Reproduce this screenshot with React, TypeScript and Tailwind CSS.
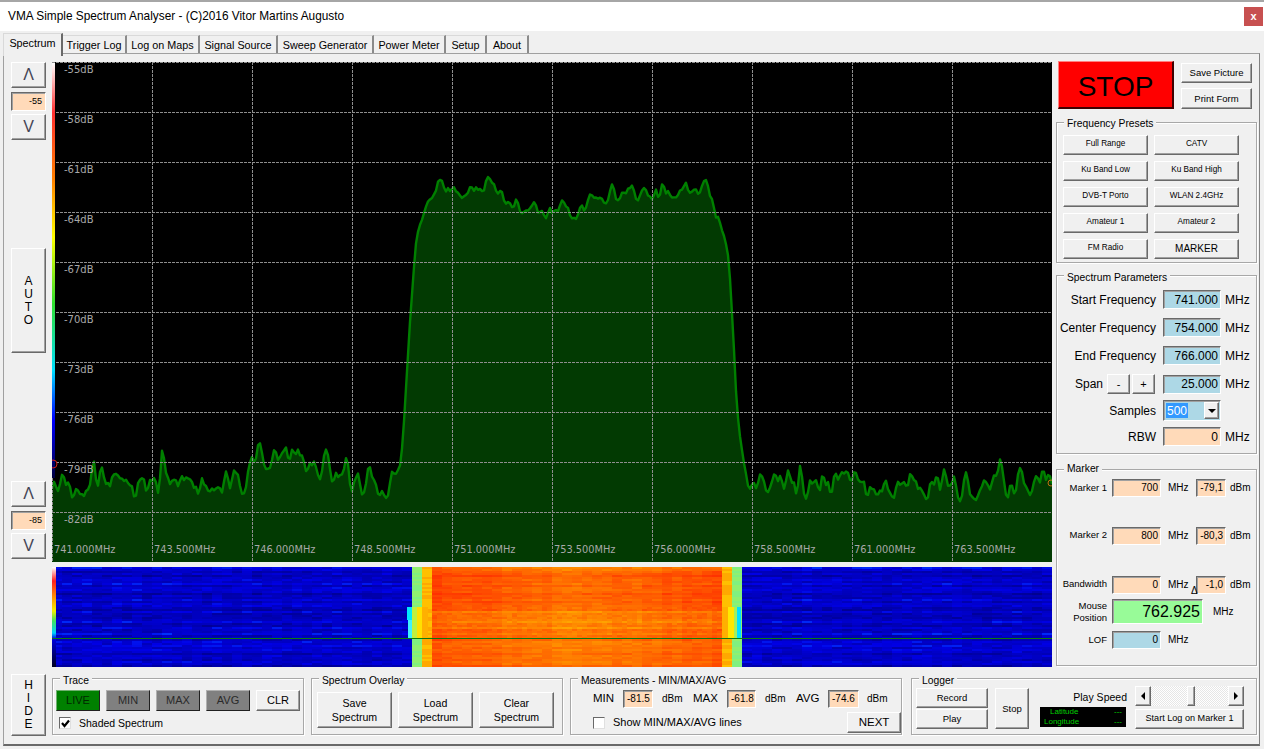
import React from 'react';

const raised = 'border border-t-white border-l-white border-r-[#696969] border-b-[#696969] shadow-[inset_-1px_-1px_0_#a0a0a0] bg-[#f0f0f0] flex items-center justify-center text-center';
const sunken = 'border border-t-[#696969] border-l-[#696969] border-r-white border-b-white shadow-[inset_1px_1px_0_#a0a0a0] flex items-center justify-end';

function rng(seed: number) {
  return () => {
    seed |= 0;
    seed = (seed + 0x6d2b79f5) | 0;
    let t = Math.imul(seed ^ (seed >>> 15), 1 | seed);
    t = (t + Math.imul(t ^ (t >>> 7), 61 | t)) ^ t;
    return ((t ^ (t >>> 14)) >>> 0) / 4294967296;
  };
}

const envelope: [number, number][] = [
  [52, 486], [240, 484], [250, 470], [256, 452], [298, 452], [304, 468], [345, 470], [352, 482], [396, 482],
  [401, 462], [404, 420], [407, 370], [410, 320], [413, 280], [416, 245], [419, 225], [423, 215], [427, 205],
  [431, 195], [434, 187], [490, 188], [498, 195], [523, 205], [540, 215], [557, 211], [577, 211], [590, 202],
  [607, 195], [630, 188], [657, 192], [683, 185], [708, 194], [715, 200], [718, 215], [725, 240], [728, 257],
  [730, 280], [733, 330], [736, 390], [739, 430], [743, 460], [748, 484], [1052, 484],
];

const spikes: [number, number][] = [
  [93, -24], [162, -30], [202, -14], [140, -10], [262, -10], [283, -8], [860, -14], [932, -14], [1000, -12], [800, -10], [770, -9],
];

function envAt(x: number) {
  for (let i = 1; i < envelope.length; i++) {
    const [x0, y0] = envelope[i - 1];
    const [x1, y1] = envelope[i];
    if (x <= x1) return y0 + ((y1 - y0) * (x - x0)) / (x1 - x0);
  }
  return 484;
}

function buildTrace() {
  const r = rng(71);
  const raw: number[] = [];
  for (let x = 52; x <= 1052; x += 2) raw.push(r() - 0.5);
  const pts: string[] = [];
  raw.forEach((_, i) => {
    const x = 52 + i * 2;
    const n = ((raw[i - 1] ?? 0) * 0.7 + raw[i] * 1.6 + (raw[i + 1] ?? 0) * 0.7) / 1.8;
    const edge = (x > 398 && x < 430) || (x > 716 && x < 748);
    const floor = x <= 398 || x >= 748;
    const amp = edge ? 4 : floor ? 26 : 17;
    let y = envAt(x) + n * amp;
    spikes.forEach(([sx, dy]) => {
      if (Math.abs(sx - x) < 4) y += dy * (1 - Math.abs(sx - x) / 4);
    });
    pts.push(`${x},${y.toFixed(1)}`);
  });
  return pts;
}

const tracePts = buildTrace();
const dbLabels = ['-55dB', '-58dB', '-61dB', '-64dB', '-67dB', '-70dB', '-73dB', '-76dB', '-79dB', '-82dB'];
const freqLabels = ['741.000MHz', '743.500MHz', '746.000MHz', '748.500MHz', '751.000MHz', '753.500MHz', '756.000MHz', '758.500MHz', '761.000MHz', '763.500MHz'];

function SpectrumChart() {
  return (
    <svg width="1000" height="500" viewBox="52 62 1000 500" className="block bg-black">
      <defs>
        <linearGradient id="scale" x1="0" y1="0" x2="0" y2="1">
          <stop offset="0" stopColor="#ffffff" />
          <stop offset="0.12" stopColor="#ff3030" />
          <stop offset="0.28" stopColor="#ff8000" />
          <stop offset="0.42" stopColor="#ffff00" />
          <stop offset="0.58" stopColor="#30e030" />
          <stop offset="0.74" stopColor="#00e0ff" />
          <stop offset="0.86" stopColor="#0000ff" />
          <stop offset="1" stopColor="#000040" />
        </linearGradient>
      </defs>
      <polygon points={`52,562 ${tracePts.join(' ')} 1052,562`} fill="#023a02" />
      <polyline points={tracePts.join(' ')} fill="none" stroke="#008000" strokeWidth="2.4" strokeLinejoin="round" />
      {Array.from({ length: 10 }, (_, i) => (
        <line key={i} x1={52.5 + i * 100} x2={52.5 + i * 100} y1={62} y2={562} stroke="#8e8e8e" strokeDasharray="3 1" />
      ))}
      {Array.from({ length: 10 }, (_, i) => (
        <line key={i} x1={52} x2={1052} y1={62.5 + i * 50} y2={62.5 + i * 50} stroke="#8e8e8e" strokeDasharray="3 1" />
      ))}
      <rect x="52" y="63" width="3" height="415" fill="url(#scale)" />
      <circle cx="53" cy="464" r="4" fill="none" stroke="#d02020" />
      <circle cx="1051" cy="483" r="3" fill="none" stroke="#c07010" />
      {dbLabels.map((t, i) => (
        <text key={t} x={64} y={73 + i * 50} fill="#a8a8a8" fontSize="10" fontFamily="'DejaVu Sans', sans-serif">{t}</text>
      ))}
      {freqLabels.map((t, i) => (
        <text key={t} x={54 + i * 100} y={553} fill="#a8a8a8" fontSize="9.8" fontFamily="'DejaVu Sans', sans-serif">{t}</text>
      ))}
    </svg>
  );
}

function buildWaterfall() {
  const r = rng(5);
  const rowBias = Array.from({ length: 50 }, () => r());
  rowBias[0] = 1;
  const colBias = Array.from({ length: 100 }, () => r());
  const cells: { x: number; y: number; w: number; h: number; c: string }[] = [];

  const blue = (row: number, col: number) => {
    const v = rowBias[row] * 0.5 + r() * 0.42 + colBias[col] * 0.08;
    const b = Math.round(140 + v * 115);
    const g = v > 0.78 ? Math.round((v - 0.78) * 260) : 0;
    return `rgb(0,${g},${b})`;
  };
  const hot = (x: number, y: number, row: number, col: number) => {
    const mid = 1 - Math.abs(x - 577) / 150;
    const band = y > 610 && y < 628 ? 0.14 : y > 572 && y < 606 ? -0.12 : 0;
    const v = Math.min(1, Math.max(0, 0.14 + mid * 0.3 + band + colBias[col] * 0.1 + rowBias[row] * 0.22 + r() * 0.2));
    return `rgb(255,${Math.round(30 + v * 135)},0)`;
  };

  for (let row = 0; row < 50; row++) {
    const y = 567 + row * 2;
    const smear = y >= 607 && y < 638;
    for (let col = 0; col < 100; col++) {
      const x = 52 + col * 10;
      let c = blue(row, col);
      if (x === 412 || x === 732) c = r() > 0.5 ? '#90f070' : '#80f080';
      else if (x === 422 || x === 722) c = r() > 0.5 ? '#ffc000' : '#ffa800';
      if (x >= 432 && x < 722) {
        if (smear) {
          cells.push({ x, y, w: 5, h: 2, c: hot(x, y, row, col) });
          cells.push({ x: x + 5, y, w: 5, h: 2, c: hot(x, y, row, col) });
          continue;
        }
        c = hot(x, y, row, col);
      }
      cells.push({ x, y, w: 10, h: 2, c });
    }
  }
  return cells;
}

const waterfallCells = buildWaterfall();

function Waterfall() {
  return (
    <svg width="1000" height="100" viewBox="52 567 1000 100" className="block mt-[5px]" shapeRendering="crispEdges">
      <defs>
        <linearGradient id="wscale" x1="0" y1="0" x2="0" y2="1">
          <stop offset="0" stopColor="#ffffff" />
          <stop offset="0.14" stopColor="#ff2020" />
          <stop offset="0.32" stopColor="#ffa000" />
          <stop offset="0.44" stopColor="#f0f000" />
          <stop offset="0.54" stopColor="#40e060" />
          <stop offset="0.66" stopColor="#00d0ff" />
          <stop offset="0.72" stopColor="#0000e0" />
          <stop offset="1" stopColor="#000020" />
        </linearGradient>
      </defs>
      {waterfallCells.map((c, i) => (
        <rect key={i} x={c.x} y={c.y} width={c.w} height={c.h} fill={c.c} />
      ))}
      <rect x="407" y="607" width="5" height="13" fill="#00e8ff" />
      <rect x="408" y="620" width="4" height="18" fill="#40f0ff" />
      <rect x="412" y="607" width="7" height="31" fill="#c0f040" />
      <rect x="417" y="607" width="5" height="31" fill="#ffe000" />
      <rect x="422" y="607" width="6" height="31" fill="#ffb000" />
      <rect x="722" y="607" width="6" height="31" fill="#ffb000" />
      <rect x="728" y="607" width="6" height="31" fill="#ffe800" />
      <rect x="734" y="607" width="3" height="31" fill="#a0f060" />
      <rect x="737" y="607" width="4" height="31" fill="#00e0ff" />
      <rect x="52" y="567" width="4" height="100" fill="url(#wscale)" />
      <rect x="52" y="638" width="1000" height="1" fill="#0a7a10" />
    </svg>
  );
}

function Group({ title, className, children, legendClass = 'top-[-7px]' }: { title: string; className: string; children: React.ReactNode; legendClass?: string }) {
  return (
    <div className={`relative border border-[#a8a8a8] shadow-[inset_1px_1px_0_#ffffff,1px_1px_0_#ffffff] ${className}`}>
      <span className={`absolute left-[7px] ${legendClass} bg-[#f0f0f0] px-[3px] text-[10.3px] leading-[14px] whitespace-nowrap`}>{title}</span>
      {children}
    </div>
  );
}

function LeftSpin({ value, className }: { value: string; className: string }) {
  return (
    <div className={className}>
      <div className={`${raised} h-[26px] text-[16px] text-[#445]`}>Λ</div>
      <div className={`${sunken} h-[19px] mt-[4px] bg-[#ffdab9] text-[9px] pr-[3px]`}>{value}</div>
      <div className={`${raised} h-[26px] mt-[3px] text-[16px] text-[#445]`}>V</div>
    </div>
  );
}

function ParamRow({ label, value, bg, className }: { label: string; value: string; bg: string; className: string }) {
  return (
    <div className={`flex items-center h-[19px] ${className}`}>
      <div className="w-[99px] text-right text-[12px]">{label}</div>
      <div className={`${sunken} ${bg} ml-[7px] w-[58px] h-[19px] text-[12px] pr-[2px]`}>{value}</div>
      <div className="ml-[4px] text-[12px]">MHz</div>
    </div>
  );
}

function MarkerRow({ label, value, level, className, labelClass = '' }: { label: string; value: string; level: string; className: string; labelClass?: string }) {
  return (
    <div className={`relative flex items-center h-[18px] text-[10px] ${className}`}>
      <div className={`w-[50px] text-right text-[9.5px] whitespace-nowrap ${labelClass}`}>{label}</div>
      <div className={`${sunken} bg-[#ffdab9] ml-[5px] w-[49px] h-[18px] pr-[2px]`}>{value}</div>
      <div className="ml-[7px] w-[28px]">MHz</div>
      <div className={`${sunken} bg-[#ffdab9] w-[30px] h-[18px] pr-[2px]`}>{level}</div>
      <div className="ml-[4px]">dBm</div>
    </div>
  );
}

function Check({ on }: { on?: boolean }) {
  return (
    <div className="w-[12px] h-[12px] bg-white border border-t-[#696969] border-l-[#696969] border-r-[#e0e0e0] border-b-[#e0e0e0] flex items-center justify-center">
      {on && (
        <svg width="9" height="9" viewBox="0 0 9 9">
          <path d="M1 4 L3.5 7 L8 1.5" fill="none" stroke="#000" strokeWidth="2.2" />
        </svg>
      )}
    </div>
  );
}

function Tri({ dir }: { dir: 'left' | 'right' | 'down' }) {
  const d = dir === 'left' ? 'M5 1 L5 9 L1 5 Z' : dir === 'right' ? 'M1 1 L1 9 L5 5 Z' : 'M1 2 L9 2 L5 6 Z';
  return (
    <svg width={dir === 'down' ? 10 : 6} height="10" viewBox={dir === 'down' ? '0 0 10 8' : '0 0 6 10'}>
      <path d={d} fill="#000" />
    </svg>
  );
}

const tabs = [
  { name: 'Trigger Log', w: 'w-[64px]' },
  { name: 'Log on Maps', w: 'w-[73px]' },
  { name: 'Signal Source', w: 'w-[78px]' },
  { name: 'Sweep Generator', w: 'w-[96px]' },
  { name: 'Power Meter', w: 'w-[72px]' },
  { name: 'Setup', w: 'w-[41px]' },
  { name: 'About', w: 'w-[42px]' },
];

const presets = ['Full Range', 'CATV', 'Ku Band Low', 'Ku Band High', 'DVB-T Porto', 'WLAN 2.4GHz', 'Amateur 1', 'Amateur 2', 'FM Radio'];

export default function App() {
  return (
    <div className="w-[1264px] h-[749px] overflow-hidden bg-[#f0f0f0] text-black font-['Liberation_Sans',Arial,sans-serif] leading-none">
      {/* Title bar */}
      <div className="h-[31px] bg-white border-t-2 border-[#a6a6a6] flex items-center justify-between pl-[8px] pr-px">
        <span className="text-[11.85px]">VMA Simple Spectrum Analyser - (C)2016 Vitor Martins Augusto</span>
        <div className="w-[19px] h-[19px] bg-[#c75050] text-white text-[11px] font-bold flex items-center justify-center">x</div>
      </div>

      {/* Tabs */}
      <div className="flex h-[22px] pl-[3px] text-[10.8px]">
        <div className="relative z-10 w-[60px] h-[23px] mt-[2px] pb-[3px] bg-[#f0f0f0] border border-[#d9d9d9] border-b-0 border-r-[#696969] border-r-2 flex items-center justify-center">Spectrum</div>
        {tabs.map((t) => (
          <div key={t.name} className={`${t.w} h-[18px] mt-[4px] pt-[1px] border-r-2 border-r-[#8a8a8a] border-t border-t-[#d9d9d9] flex items-center justify-center whitespace-nowrap`}>{t.name}</div>
        ))}
      </div>

      {/* Tab page */}
      <div className="ml-[3px] w-[1257px] h-[693px] border border-[#a0a0a0] border-r-[#808080] border-b-2 border-b-[#696969] pl-[7px] pt-[8px]">
        <div className="flex h-[605px]">
          {/* Left controls */}
          <div className="w-[35px] flex flex-col">
            <LeftSpin value="-55" className="" />
            <div className={`${raised} mt-[108px] h-[105px] text-[12px] leading-[13px]`}>A<br />U<br />T<br />O</div>
            <LeftSpin value="-85" className="mt-[128px]" />
          </div>

          {/* Chart column */}
          <div className="ml-[6px] w-[1000px]">
            <SpectrumChart />
            <Waterfall />
          </div>

          {/* Right column */}
          <div className="ml-[4px] w-[201px]">
            <div className="flex -mt-px pl-[2px]">
              <div className="w-[116px] h-[48px] pt-[4px] bg-[#ff0000] border border-t-[#ff8080] border-l-[#ff8080] border-r-2 border-b-2 border-r-[#400000] border-b-[#400000] flex items-center justify-center text-[28px] text-black">STOP</div>
              <div className="ml-[7px] w-[71px] flex flex-col pt-[2px]">
                <div className={`${raised} h-[20px] text-[9.5px]`}>Save Picture</div>
                <div className={`${raised} h-[21px] mt-[5px] text-[9.5px]`}>Print Form</div>
              </div>
            </div>

            <Group title="Frequency Presets" className="mt-[13px] h-[141px] pl-[6px] pt-[12px]" legendClass="top-[-6px]">
              <div className="grid grid-cols-[85px_85px] gap-x-[6px] gap-y-[6px]">
                {presets.map((p) => (
                  <div key={p} className={`${raised} h-[20px] pb-[1px] text-[8.2px]`}>{p}</div>
                ))}
                <div className={`${raised} h-[20px] text-[10px]`}>MARKER</div>
              </div>
            </Group>

            <Group title="Spectrum Parameters" className="mt-[12px] h-[179px] pt-[14px]" legendClass="top-[-5px]">
              <ParamRow label="Start Frequency" value="741.000" bg="bg-[#add8e6]" className="" />
              <ParamRow label="Center Frequency" value="754.000" bg="bg-[#add8e6]" className="mt-[9px]" />
              <ParamRow label="End Frequency" value="766.000" bg="bg-[#add8e6]" className="mt-[9px]" />
              <div className="flex items-center h-[20px] mt-[9px]">
                <div className="w-[46px] text-right text-[12px]">Span</div>
                <div className={`${raised} ml-[4px] w-[23px] h-[20px] text-[11px]`}>-</div>
                <div className={`${raised} ml-[2px] w-[23px] h-[20px] text-[11px]`}>+</div>
                <div className={`${sunken} bg-[#add8e6] ml-[8px] w-[58px] h-[19px] text-[12px] pr-[2px]`}>25.000</div>
                <div className="ml-[4px] text-[12px]">MHz</div>
              </div>
              <div className="flex items-center h-[21px] mt-[6px]">
                <div className="w-[99px] text-right text-[12px]">Samples</div>
                <div className={`${sunken} !justify-start bg-[#add8e6] ml-[7px] w-[58px] h-[21px] text-[12px] pl-[2px]`}>
                  <span className="bg-[#3399ff] text-white w-[22px] h-[15px] flex items-center pl-[1px]">500</span>
                  <div className={`${raised} ml-[16px] w-[15px] h-[17px]`}><Tri dir="down" /></div>
                </div>
              </div>
              <ParamRow label="RBW" value="0" bg="bg-[#ffdab9]" className="mt-[6px]" />
            </Group>

            <Group title="Marker" className="mt-[15px] h-[197px] pt-[9px]" legendClass="top-[-8px]">
              <MarkerRow label="Marker 1" value="700" level="-79,1" className="" labelClass="pb-[1px]" />
              <MarkerRow label="Marker 2" value="800" level="-80,3" className="mt-[30px]" labelClass="pb-[2px]" />
              <MarkerRow label="Bandwidth" value="0" level="-1,0" className="mt-[31px]" labelClass="pb-[3px]" />
              <div className="flex items-center h-[25px] mt-[5px]">
                <div className="w-[50px] text-right text-[9.5px] leading-[12px]">Mouse<br />Position</div>
                <div className={`${sunken} bg-[#98fb98] ml-[5px] w-[91px] h-[25px] text-[16px] pr-[2px]`}>762.925</div>
                <div className="ml-[10px] text-[10px]">MHz</div>
              </div>
              <div className="flex items-center h-[18px] mt-[7px] text-[10px]">
                <div className="w-[50px] text-right text-[9.5px]">LOF</div>
                <div className={`${sunken} bg-[#add8e6] ml-[5px] w-[49px] h-[18px] pr-[2px]`}>0</div>
                <div className="ml-[7px]">MHz</div>
              </div>
              <span className="absolute left-[134px] top-[116px] text-[10px]">Δ</span>
            </Group>
          </div>
        </div>

        {/* Bottom row */}
        <div className="flex mt-[6px]">
          <div className={`${raised} w-[35px] h-[62px] mt-px text-[12px] leading-[13px]`}>H<br />I<br />D<br />E</div>

          <Group title="Trace" className="ml-[6px] mt-[5px] w-[252px] h-[57px] pl-[3px] pt-[11px]" legendClass="top-[-5px]">
            <div className="flex gap-[6px] text-[11px]">
              <div className="w-[44px] h-[21px] bg-[#008000] text-[#002800] border border-t-[#70b070] border-l-[#70b070] border-r-[#202020] border-b-[#202020] flex items-center justify-center">LIVE</div>
              {['MIN', 'MAX', 'AVG'].map((t) => (
                <div key={t} className="w-[44px] h-[21px] bg-[#808080] text-[#2a2a2a] border border-t-[#b0b0b0] border-l-[#b0b0b0] border-r-[#202020] border-b-[#202020] flex items-center justify-center">{t}</div>
              ))}
              <div className={`${raised} w-[44px] h-[21px]`}>CLR</div>
            </div>
            <div className="flex items-center mt-[6px] pl-[3px] text-[10.5px]">
              <Check on />
              <span className="ml-[8px]">Shaded Spectrum</span>
            </div>
          </Group>

          <Group title="Spectrum Overlay" className="ml-[7px] mt-[5px] w-[252px] h-[57px] pl-[5px] pt-[13px]" legendClass="top-[-5px]">
            <div className="flex gap-[6px] text-[10.6px] leading-[14px]">
              <div className={`${raised} w-[75px] h-[36px]`}>Save<br />Spectrum</div>
              <div className={`${raised} w-[75px] h-[36px]`}>Load<br />Spectrum</div>
              <div className={`${raised} w-[75px] h-[36px]`}>Clear<br />Spectrum</div>
            </div>
          </Group>

          <Group title="Measurements - MIN/MAX/AVG" className="ml-[7px] mt-[5px] w-[332px] h-[57px] pl-[22px] pt-[11px]" legendClass="top-[-5px]">
            <div className="flex items-center h-[18px] text-[11.5px]">
              <div className="w-[30px]">MIN</div>
              <div className={`${sunken} bg-[#ffdab9] w-[30px] h-[18px] text-[10px] !justify-start pl-[3px]`}>-81.5</div>
              <div className="ml-[9px] w-[31px] text-[10px]">dBm</div>
              <div className="w-[34px]">MAX</div>
              <div className={`${sunken} bg-[#ffdab9] w-[29px] h-[18px] text-[10px] !justify-start pl-[3px]`}>-61.8</div>
              <div className="ml-[9px] w-[31px] text-[10px]">dBm</div>
              <div className="w-[32px]">AVG</div>
              <div className={`${sunken} bg-[#ffdab9] w-[31px] h-[18px] text-[10px] !justify-start pl-[3px]`}>-74.6</div>
              <div className="ml-[8px] text-[10px]">dBm</div>
            </div>
            <div className="flex items-center justify-between h-[21px] mt-[4px]">
              <div className="flex items-center text-[11px]">
                <Check />
                <span className="ml-[8px]">Show MIN/MAX/AVG lines</span>
              </div>
              <div className={`${raised} w-[54px] h-[21px] text-[11.5px]`}>NEXT</div>
            </div>
          </Group>

          <Group title="Logger" className="ml-[9px] mt-[5px] w-[346px] h-[57px] pl-[4px] pt-[9px]" legendClass="top-[-5px]">
            <div className="flex">
              <div className="w-[72px] flex flex-col gap-[1px] text-[9.5px]">
                <div className={`${raised} h-[20px]`}>Record</div>
                <div className={`${raised} h-[20px]`}>Play</div>
              </div>
              <div className={`${raised} ml-[7px] w-[34px] h-[41px] text-[9.5px]`}>Stop</div>
              <div className="ml-[11px] w-[87px] flex flex-col">
                <div className="h-[19px] text-[10.5px] flex items-center justify-end">Play Speed</div>
                <div className="h-[20px] w-[86px] bg-black text-[#00d000] text-[8px] flex flex-col justify-center gap-[2px] px-[4px]">
                  <div className="flex justify-between pl-[6px]"><span>Latitude</span><span>---</span></div>
                  <div className="flex justify-between"><span>Longitude</span><span>---</span></div>
                </div>
              </div>
              <div className="ml-[8px] w-[109px] -mt-[2px]">
                <div className="flex h-[20px] bg-[repeating-conic-gradient(#e6e6e6_0_25%,#ffffff_0_50%)] bg-[length:2px_2px]">
                  <div className={`${raised} w-[16px]`}><Tri dir="left" /></div>
                  <div className="flex-1">
                    <div className={`${raised} ml-[36px] w-[8px] h-[20px]`} />
                  </div>
                  <div className={`${raised} w-[16px]`}><Tri dir="right" /></div>
                </div>
                <div className={`${raised} h-[20px] mt-[3px] text-[9.1px]`}>Start Log on Marker 1</div>
              </div>
            </div>
          </Group>
        </div>
      </div>
    </div>
  );
}
